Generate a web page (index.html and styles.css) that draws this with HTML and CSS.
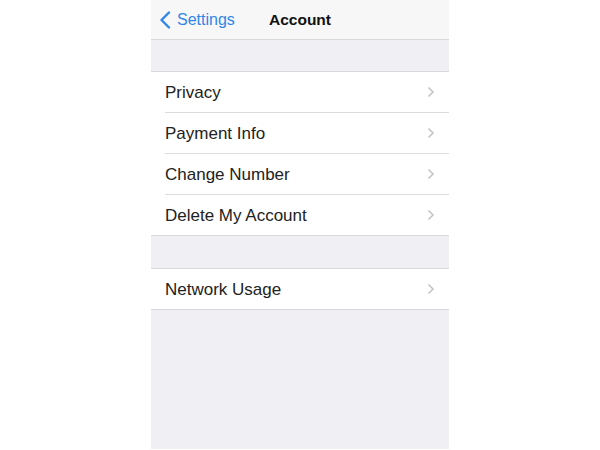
FILE: index.html
```html
<!DOCTYPE html>
<html>
<head>
<meta charset="utf-8">
<link rel="stylesheet" href="styles.css">
</head>
<body>
<div class="screen">
  <div class="navbar">
    <div class="back">
      <svg class="back-icon" width="12" height="18" viewBox="0 0 12 18"><path d="M10 1.5 L2.5 9 L10 16.5" fill="none" stroke="#2f86e4" stroke-width="2.4" stroke-linecap="round" stroke-linejoin="round"/></svg>
      <span>Settings</span>
    </div>
    <div class="title">Account</div>
  </div>
  <div class="gap"></div>
  <div class="group">
    <div class="row"><span>Privacy</span><svg class="chev" width="8" height="12" viewBox="0 0 8 12"><path d="M1.5 1.5 L6 6 L1.5 10.5" fill="none" stroke="#c4c4c9" stroke-width="1.6"/></svg></div>
    <div class="row"><span>Payment Info</span><svg class="chev" width="8" height="12" viewBox="0 0 8 12"><path d="M1.5 1.5 L6 6 L1.5 10.5" fill="none" stroke="#c4c4c9" stroke-width="1.6"/></svg></div>
    <div class="row"><span>Change Number</span><svg class="chev" width="8" height="12" viewBox="0 0 8 12"><path d="M1.5 1.5 L6 6 L1.5 10.5" fill="none" stroke="#c4c4c9" stroke-width="1.6"/></svg></div>
    <div class="row"><span>Delete My Account</span><svg class="chev" width="8" height="12" viewBox="0 0 8 12"><path d="M1.5 1.5 L6 6 L1.5 10.5" fill="none" stroke="#c4c4c9" stroke-width="1.6"/></svg></div>
  </div>
  <div class="gap"></div>
  <div class="group">
    <div class="row"><span>Network Usage</span><svg class="chev" width="8" height="12" viewBox="0 0 8 12"><path d="M1.5 1.5 L6 6 L1.5 10.5" fill="none" stroke="#c4c4c9" stroke-width="1.6"/></svg></div>
  </div>
</div>
</body>
</html>
```

FILE: styles.css
```css
html, body {
  margin: 0;
  padding: 0;
  background: #ffffff;
  font-family: "Liberation Sans", Arial, sans-serif;
}
.screen {
  width: 298px;
  height: 449px;
  margin: 0 auto 0 151px;
  background: #efeff4;
  display: flex;
  flex-direction: column;
}
.navbar {
  height: 39px;
  background: #f7f7f8;
  border-bottom: 1px solid #d9d9dc;
  position: relative;
  display: flex;
  align-items: center;
}
.back {
  display: flex;
  align-items: center;
  gap: 6px;
  padding-left: 8px;
  color: #2f86e4;
  font-size: 16px;
}
.title {
  position: absolute;
  left: 0;
  right: 0;
  text-align: center;
  font-size: 15.5px;
  font-weight: bold;
  color: #111;
  pointer-events: none;
}
.gap {
  height: 31px;
}
.gap + .group + .gap {
  height: 32px;
}
.group {
  background: #fff;
  border-top: 1px solid #d9d9dc;
  border-bottom: 1px solid #d9d9dc;
  padding-left: 14px;
}
.row {
  height: 40px;
  display: flex;
  align-items: center;
  justify-content: space-between;
  padding-right: 14px;
  font-size: 17px;
  color: #222;
  border-bottom: 1px solid #dcdcdf;
}
.row span {
  padding-top: 2px;
}
.row:last-child {
  border-bottom: none;
}
.chev {
  display: block;
}
```
